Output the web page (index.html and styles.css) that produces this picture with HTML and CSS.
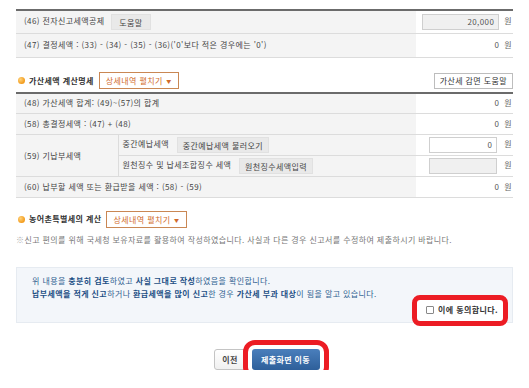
FILE: index.html
```html
<!DOCTYPE html>
<html lang="ko">
<head>
<meta charset="utf-8">
<link rel="stylesheet" href="styles.css">
</head>
<body>
<div class="page">
  <table class="tax">
    <tr class="r46">
      <th>(46) 전자신고세액공제 <span class="btn-gray">도움말</span></th>
      <td class="val"><span class="field ro">20,000</span><span class="won">원</span></td>
    </tr>
    <tr class="r47">
      <th>(47) 결정세액 : (33) - (34) - (35) - (36)('0'보다 적은 경우에는 '0')</th>
      <td class="val">0<span class="won">원</span></td>
    </tr>
  </table>

  <div class="sec-head sec1">
    <span class="bullet"></span>
    <span class="sec-title">가산세액 계산명세</span>
    <span class="btn-orange">상세내역 펼치기 <span class="caret">▼</span></span>
    <span class="spacer"></span>
    <span class="btn-line">가산세 감면 도움말</span>
  </div>

  <table class="tax">
    <tr>
      <th colspan="2">(48) 가산세액 합계: (49)~(57)의 합계</th>
      <td class="val">0<span class="won">원</span></td>
    </tr>
    <tr>
      <th colspan="2">(58) 총결정세액 : (47) + (48)</th>
      <td class="val">0<span class="won">원</span></td>
    </tr>
    <tr class="sub">
      <th rowspan="2" class="c59">(59) 기납부세액</th>
      <th class="subl">중간예납세액 <span class="btn-gray">중간예납세액 불러오기</span></th>
      <td class="val"><span class="field wide"><span>0</span></span><span class="won">원</span></td>
    </tr>
    <tr class="sub">
      <th class="subl">원천징수 및 납세조합징수 세액 <span class="btn-gray">원천징수세액입력</span></th>
      <td class="val"><span class="field wide ro"></span><span class="won">원</span></td>
    </tr>
    <tr>
      <th colspan="2">(60) 납부할 세액 또는 환급받을 세액 : (58) - (59)</th>
      <td class="val">0<span class="won">원</span></td>
    </tr>
  </table>

  <div class="sec-head sec2">
    <span class="bullet"></span>
    <span class="sec-title">농어촌특별세의 계산</span>
    <span class="btn-orange">상세내역 펼치기 <span class="caret">▼</span></span>
  </div>

  <p class="note"><span class="mark">※</span>신고 편의를 위해 국세청 보유자료를 활용하여 작성하였습니다. 사실과 다른 경우 신고서를 수정하여 제출하시기 바랍니다.</p>

  <div class="confirm">
    <p class="line">위 내용을 <b>충분히 검토</b>하였고 <b>사실 그대로 작성</b>하였음을 확인합니다.</p>
    <p class="line"><b>납부세액을 적게 신고</b>하거나 <b>환급세액을 많이 신고</b>한 경우 <b>가산세 부과 대상</b>이 됨을 알고 있습니다.</p>
    <div class="agree-row">
      <label class="agree"><span class="chk"></span>이에 동의합니다.</label>
    </div>
  </div>

  <div class="actions">
    <span class="btn-prev">이전</span>
    <span class="btn-submit">제출화면 이동</span>
  </div>
</div>
</body>
</html>
```

FILE: styles.css
```css
* { box-sizing: border-box; }
body {
  margin: 0;
  background: #fff;
  color: #444;
  font-family: "Noto Sans CJK KR", "Noto Sans", sans-serif;
  font-size: 8px;
  line-height: 1.2;
  letter-spacing: 0.4px;
}
.page {
  width: 529px;
  padding: 9px 16px 0 16px;
}
.tax {
  width: 497px;
  border-collapse: collapse;
  border-top: 2px solid #6b6b6b;
}
.tax th {
  background: #f4f4f4;
  text-align: left;
  font-weight: normal;
  padding: 0 8px;
  height: 21px;
  border-bottom: 1px solid #dcdcdc;
  white-space: nowrap;
}
.tax .r46 th { height: 23px; }
.tax .r47 th { height: 24px; }
.tax th.c59 {
  width: 102px;
  border-right: 1px solid #dcdcdc;
}
.tax th.subl { padding-left: 4px; }
.tax .sub th, .tax .sub td { height: 21px; }
.tax td.val {
  width: 97px;
  text-align: right;
  padding: 0 1px 0 0;
  border-bottom: 1px solid #dcdcdc;
  white-space: nowrap;
  color: #555;
}
.won { margin-left: 5px; color: #666; }
.field {
  display: inline-block;
  vertical-align: middle;
  width: 77px;
  height: 16px;
  line-height: 14px;
  border: 1px solid #cfcfcf;
  background: #fff;
  text-align: right;
  padding-right: 4px;
  color: #555;
}
.field.wide { width: 68px; margin-right: 2px; }
.field.ro { background: #f0f0f0; }
.btn-gray {
  display: inline-block;
  vertical-align: middle;
  margin-left: 5px;
  padding: 0 5px;
  height: 16px;
  line-height: 16px;
  background: #e9e9e9;
  border: 1px solid #e1e1e1;
  color: #444;
}
.r46 .btn-gray { padding: 0 7px; margin-left: 4px; }
.subl .btn-gray { margin-left: 5px; }

.sec-head {
  display: flex;
  align-items: center;
  height: 18px;
  padding-left: 2px;
}
.sec1 { margin-top: 14px; margin-bottom: 2px; }
.sec2 { margin-top: 12px; }
.bullet {
  width: 7px;
  height: 7px;
  border-radius: 50%;
  background: radial-gradient(circle at 35% 35%, #ffd27a, #f29a1a 70%);
  margin-right: 4px;
}
.sec-title { font-weight: bold; color: #333; }
.btn-orange {
  margin-left: 5px;
  height: 17px;
  line-height: 15px;
  padding: 0 6px;
  border: 1px solid #c98754;
  color: #d06a2a;
  background: #fff;
}
.caret { font-size: 5px; vertical-align: 1px; margin-left: 1px; }
.spacer { flex: 1; }
.btn-line {
  height: 16px;
  line-height: 14px;
  padding: 0 5px;
  border: 1px solid #bdbdbd;
  background: #fff;
  color: #333;
}
.note {
  margin: 7px 0 0 0;
  color: #777;
  white-space: nowrap;
}
.mark { color: #aaa; }
.confirm {
  margin-top: 22px;
  height: 56px;
  background: #f3f6fa;
  border: 1px solid #e6ebf1;
  padding: 6px 0 0 15px;
  color: #2f6190;
  display: flex;
  flex-direction: column;
}
.line { margin: 0; line-height: 13px; white-space: nowrap; }
.line b { color: #1d4f85; }
.agree-row {
  flex: 1;
  display: flex;
  justify-content: flex-end;
  align-items: flex-end;
  padding-right: 9px;
}
.agree {
  display: flex;
  align-items: center;
  height: 21px;
  margin-bottom: 1px;
  padding: 0 5px 0 9px;
  background: #fff;
  font-weight: bold;
  color: #333;
  outline: 5px solid #ec1c24;
  border-radius: 3px;
}
.chk {
  width: 8px;
  height: 8px;
  border: 1px solid #888;
  border-radius: 1px;
  background: #fff;
  margin-right: 4px;
}
.actions {
  display: flex;
  justify-content: center;
  gap: 5px;
  margin-top: 26px;
  padding-left: 4px;
}
.btn-prev {
  width: 33px;
  height: 21px;
  line-height: 19px;
  text-align: center;
  border: 1px solid #c4c4c4;
  border-radius: 3px;
  background: linear-gradient(#fff, #f0f0f0);
  color: #444;
  font-weight: bold;
}
.btn-submit {
  width: 68px;
  height: 21px;
  line-height: 21px;
  text-align: center;
  border-radius: 3px;
  background: linear-gradient(#4a7fbc, #2e5f9a);
  color: #fff;
  font-weight: bold;
  outline: 5px solid #ec1c24;
  outline-offset: 4px;
}
```
